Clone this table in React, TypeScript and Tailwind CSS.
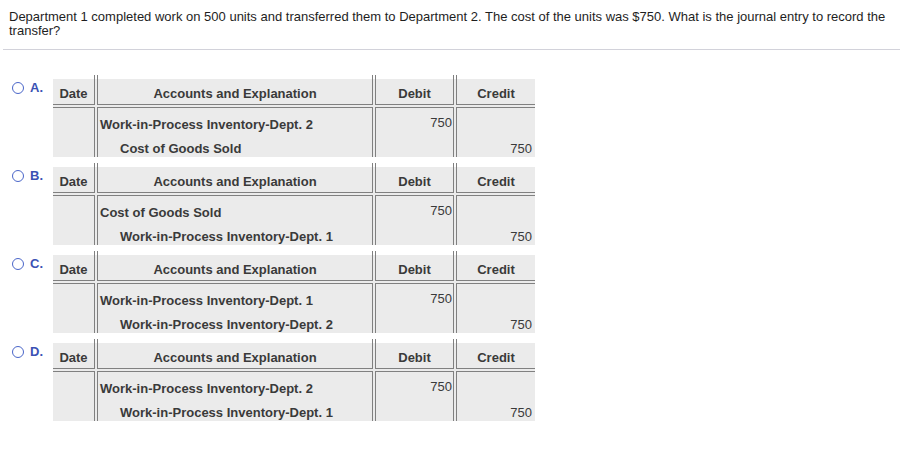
const options = [
  {
    key: "A.",
    first: "Work-in-Process Inventory-Dept. 2",
    second: "Cost of Goods Sold",
  },
  {
    key: "B.",
    first: "Cost of Goods Sold",
    second: "Work-in-Process Inventory-Dept. 1",
  },
  {
    key: "C.",
    first: "Work-in-Process Inventory-Dept. 1",
    second: "Work-in-Process Inventory-Dept. 2",
  },
  {
    key: "D.",
    first: "Work-in-Process Inventory-Dept. 2",
    second: "Work-in-Process Inventory-Dept. 1",
  },
];

const cols = "grid grid-cols-[42px_276px_79px_79px] gap-x-[2px]";
const line = "border-[#808080]";

function JournalTable({ first, second }: { first: string; second: string }) {
  return (
    <div className="w-[482px]">
      {/* the inner rules poke a few px above the grey box */}
      <div className={`${cols} h-[4px]`}>
        <div className={`border-r ${line}`} />
        <div className={`border-x ${line}`} />
        <div className={`border-x ${line}`} />
        <div className={`border-l ${line}`} />
      </div>
      <div className={`${cols} gap-y-[2px] bg-[#ebebeb] font-bold text-[13px] leading-[15px] text-[#3a3a3a]`}>
        <div className={`border-r border-b ${line} pt-[7px] pb-[3px] text-center`}>Date</div>
        <div className={`border-x border-b ${line} pt-[7px] pb-[3px] text-center`}>Accounts and Explanation</div>
        <div className={`border-x border-b ${line} pt-[7px] pb-[3px] text-center`}>Debit</div>
        <div className={`border-l border-b ${line} pt-[7px] pb-[3px] text-center`}>Credit</div>

        <div className={`border-r border-t ${line} h-[50px]`} />
        <div className={`border-x border-t ${line} h-[50px] pt-[9px] pl-[2px]`}>
          <div>{first}</div>
          <div className="mt-[9px] pl-[20px]">{second}</div>
        </div>
        <div className={`border-x border-t ${line} h-[50px] pt-[7px] pr-[1px] text-right font-normal`}>750</div>
        <div className={`border-l border-t ${line} h-[50px] pt-[33px] pr-[3px] text-right font-normal`}>750</div>
      </div>
    </div>
  );
}

export default function App() {
  return (
    <div className="w-[901px] h-[451px] bg-white font-['Liberation_Sans',Arial,sans-serif]">
      <div className="px-[9px] pt-[10px] pb-[11px] text-[13px] leading-[14px] text-[#1e1e1e] w-[900px]">
        Department 1 completed work on 500 units and transferred them to Department 2. The cost of the units was $750. What is the journal entry to record the transfer?
      </div>
      <div className="ml-[3px] w-[897px] h-px bg-[#d2d2da]" />

      <div className="mt-[25px] flex flex-col gap-[6px]">
        {options.map((o) => (
          <div key={o.key} className="flex items-start">
            <span className="ml-[12px] mt-[7px] size-[12px] rounded-full border border-[#4a66c9]" />
            <span className="ml-[6px] w-[23px] pt-[5px] text-[13px] leading-[15px] text-[#3b52b4] font-bold">{o.key}</span>
            <JournalTable first={o.first} second={o.second} />
          </div>
        ))}
      </div>
    </div>
  );
}
